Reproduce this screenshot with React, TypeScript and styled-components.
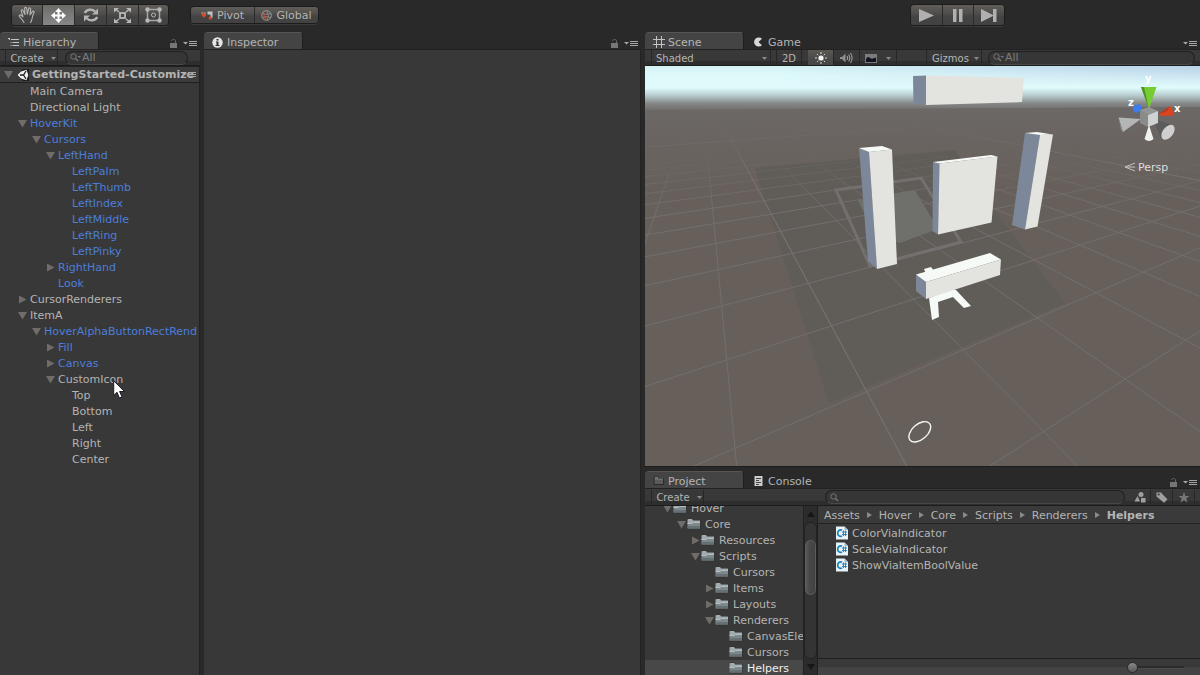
import React from 'react';
import styled, { createGlobalStyle, css } from 'styled-components';

const GlobalStyle = createGlobalStyle`
  * { box-sizing: border-box; }
  html, body { margin: 0; padding: 0; background: #292929; }
  body, button, input, select {
    font-family: "DejaVu Sans", Verdana, sans-serif;
    font-size: 11px;
    color: #b4b4b4;
  }
  button, select, input { border: 0; margin: 0; padding: 0; background: none; outline: none; border-radius: 0; }
  svg { display: block; flex: none; }
  ul { list-style: none; margin: 0; padding: 0; }
  a { color: inherit; text-decoration: none; }
`;

/* ---------- Shell ---------- */

const Window = styled.div`
  display: flex;
  flex-direction: column;
  height: 100vh;
  overflow: hidden;
  background: #292929;
`;

const MainToolbar = styled.header`
  display: flex;
  flex: none;
  align-items: center;
  height: 32px;
  padding: 0 195px 2px 11px;
`;

const ButtonGroup = styled.div<{ $height: number; $before?: string }>`
  display: flex;
  height: ${(p) => p.$height}px;
  margin-left: ${(p) => p.$before ?? '0'};
  border: 1px solid #1c1c1c;
  border-radius: 4px;
  overflow: hidden;
  box-shadow: 0 1px 0 #3a3a3a;
`;

const ToolButton = styled.button<{ $width: number; $active?: boolean }>`
  display: flex;
  align-items: center;
  justify-content: center;
  gap: 4px;
  width: ${(p) => p.$width}px;
  background: ${(p) =>
    p.$active
      ? 'linear-gradient(#6c6a67, #7a7a7a 50%, #868686)'
      : 'linear-gradient(#615e59, #504f4d 40%, #434343 60%, #424242)'};
  & + & { border-left: 1px solid #2a2a2a; }
`;

const Workspace = styled.main`
  display: grid;
  flex: 1;
  min-height: 0;
  grid-template-columns: minmax(0, 200fr) minmax(0, 437fr) minmax(0, 555fr);
  gap: 4px;
`;

const RightColumn = styled.div`
  display: grid;
  min-height: 0;
  grid-template-rows: minmax(0, 435fr) minmax(0, 204fr);
  gap: 4px;
`;

const Panel = styled.section`
  display: flex;
  flex-direction: column;
  min-width: 0;
  min-height: 0;
`;

const TabBar = styled.div`
  display: flex;
  flex: none;
  height: 17px;
`;

const Tab = styled.button<{ $active?: boolean }>`
  display: flex;
  align-items: center;
  gap: ${(p) => (p.$active ? 3 : 5)}px;
  width: 99px;
  height: 17px;
  padding: 2px 0 0 ${(p) => (p.$active ? 8 : 10)}px;
  border-top: 1px solid transparent;
  border-radius: 4px 4px 0 0;
  ${(p) =>
    p.$active &&
    css`
      background: #444;
      border-top-color: #555;
      border-right: 1px solid #1e1e1e;
    `}
`;

const TabTools = styled.div`
  display: flex;
  align-items: center;
  gap: 5px;
  margin-left: auto;
  padding: 6px 3px 0 0;
`;

const IconButton = styled.button`
  display: flex;
  align-items: center;
`;

const PanelBody = styled.div`
  flex: 1;
  min-height: 0;
  overflow: hidden;
  background: #383838;
  border-top: 1px solid #212121;
  border-right: 1px solid #222;
`;

/* ---------- Panel toolbars ---------- */

const PanelBar = styled.div<{ $height?: number }>`
  display: flex;
  flex: none;
  align-items: center;
  height: ${(p) => p.$height ?? 17}px;
  background: linear-gradient(#393939, #383838 75%, #2e2e2e 76%, #2e2e2e);
  border-top: 1px solid #222;
  border-bottom: 1px solid #1c1c1c;
`;

const BarButton = styled.button<{ $width: number; $on?: boolean; $after?: number; $gap?: number; $inset?: number }>`
  display: flex;
  flex: none;
  align-items: center;
  justify-content: center;
  gap: ${(p) => p.$gap ?? 7}px;
  width: ${(p) => p.$width}px;
  height: 15px;
  padding-top: 1px;
  padding-left: ${(p) => p.$inset ?? 0}px;
  margin-right: ${(p) => p.$after ?? 0}px;
  font-size: 10px;
  border-right: 1px solid #262626;
  background: ${(p) => (p.$on ? 'linear-gradient(#5c5853, #4b4a49 60%, #474747)' : 'none')};
`;

const BarGap = styled.span<{ $width: number; $line?: boolean }>`
  flex: none;
  width: ${(p) => p.$width}px;
  height: 15px;
  border-right: 1px solid ${(p) => (p.$line ? '#262626' : 'transparent')};
`;

const Spacer = styled.span`
  flex: 1;
`;

const SelectBox = styled.label`
  display: flex;
  flex: none;
  align-items: center;
  width: 119px;
  height: 15px;
  padding: 1px 3px 0 4px;
  border-right: 1px solid #262626;
`;

const Select = styled.select`
  flex: 1;
  appearance: none;
  font-size: 10px;
`;

const SearchBox = styled.label<{ $width?: number; $after: number }>`
  display: flex;
  flex: ${(p) => (p.$width ? `0 0 ${p.$width}px` : '1')};
  align-items: center;
  gap: 1px;
  min-width: 0;
  height: 14px;
  margin-right: ${(p) => p.$after}px;
  padding-left: 4px;
  background: #363636;
  border: 1px solid #202020;
  border-bottom-color: #484848;
  border-radius: 7px;
`;

const SearchInput = styled.input`
  width: 100%;
  min-width: 0;
  height: 12px;
  &::placeholder { color: #7c7c7c; opacity: 1; }
`;

/* ---------- Trees ---------- */

const SceneHeader = styled.div`
  position: relative;
  display: flex;
  align-items: center;
  height: 16px;
  padding-left: 3px;
  gap: 3px;
  font-weight: bold;
  white-space: nowrap;
  background: #3c3c3c;
  border-bottom: 1px solid #1f1f1f;
  overflow: hidden;
`;

const HeaderMenu = styled.span`
  position: absolute;
  right: 3px;
  top: 4px;
`;

const Row = styled.li<{ $depth: number; $blue?: boolean; $selected?: boolean }>`
  position: relative;
  display: flex;
  align-items: center;
  height: 16px;
  padding-left: ${(p) => 17 + p.$depth * 14}px;
  white-space: nowrap;
  color: ${(p) => (p.$selected ? '#f0f0f0' : p.$blue ? '#4c7edb' : '#b4b4b4')};
  background: ${(p) => (p.$selected ? '#484848' : 'transparent')};
`;

const ArrowSlot = styled.span`
  flex: none;
  width: 11px;
  margin-right: 2px;
`;

const FolderSlot = styled.span`
  flex: none;
  width: 16px;
  margin-left: -2px;
  margin-right: 2px;
`;

const Pointer = styled.span`
  position: absolute;
  left: 113px;
  top: 9px;
  z-index: 2;
`;

/* ---------- Project ---------- */

const ProjectSplit = styled.div`
  display: grid;
  flex: 1;
  min-height: 0;
  grid-template-columns: 159px 14px minmax(0, 1fr);
  background: #383838;
`;

const FolderPane = styled.nav`
  overflow: hidden;
  border-right: 1px solid #222;
`;

const ScrolledList = styled.ul`
  margin-top: -6px;
`;

const Scrollbar = styled.div`
  display: flex;
  flex-direction: column;
  align-items: center;
  padding: 5px 0;
  gap: 5px;
  background: #2c2c2c;
  border-right: 1px solid #1e1e1e;
`;

const ScrollTrack = styled.div`
  flex: 1;
  width: 13px;
  padding-top: 17px;
  background: #343434;
  border: 1px solid #222;
  border-radius: 6px;
`;

const ScrollThumb = styled.div`
  height: 55px;
  background: linear-gradient(90deg, #5a5856, #484848 40%, #424242);
  border: 1px solid #5e5e5e;
  border-radius: 6px;
`;

const FilePane = styled.div`
  display: flex;
  flex-direction: column;
  min-width: 0;
`;

const Breadcrumb = styled.nav`
  display: flex;
  flex: none;
  align-items: center;
  gap: 7px;
  height: 18px;
  padding-top: 1px;
  padding-left: 6px;
  background: #3a3a3a;
  border-bottom: 1px solid #222;
`;

const Crumb = styled.a<{ $current?: boolean }>`
  font-weight: ${(p) => (p.$current ? 'bold' : 'normal')};
`;

const FileList = styled.ul`
  flex: 1;
  padding: 1px 0 0 18px;
`;

const FileRow = styled.li`
  display: flex;
  align-items: center;
  gap: 4px;
  height: 16px;
`;

const FileFooter = styled.div`
  display: flex;
  flex: none;
  align-items: center;
  justify-content: flex-end;
  height: 17px;
  padding-right: 16px;
  background: linear-gradient(#393939 50%, #434343 50%);
  border-top: 1px solid #202020;
`;

const SizeSlider = styled.input`
  appearance: none;
  width: 57px;
  height: 11px;
  &::-webkit-slider-runnable-track {
    height: 3px;
    background: #2c2c2c;
    border-bottom: 1px solid #4c4c4c;
    border-radius: 2px;
  }
  &::-webkit-slider-thumb {
    appearance: none;
    width: 11px;
    height: 11px;
    margin-top: -4px;
    border: 1px solid #2a2a2a;
    border-radius: 50%;
    background: linear-gradient(#8a8785, #5a5a5a);
  }
`;

/* ---------- Scene ---------- */

const Viewport = styled.div`
  flex: 1;
  min-height: 0;
  background: #675f5a;
  border-bottom: 1px solid #1c1c1c;
  svg { width: 100%; height: 100%; }
`;

/* ---------- Icons ---------- */

const Caret = () => (
  <svg width="5" height="3" viewBox="0 0 5 3"><path d="M0 0h5L2.500 3z" fill="#8a8a8a" /></svg>
);

const Fold = ({ open }: { open?: boolean }) => (
  <svg width="11" height="9" viewBox="0 0 11 9">
    <path d={open ? 'M1 1h9L5.500 8.500z' : 'M2 0.500L9.500 4.500L2 8.500z'} fill="#706c69" />
  </svg>
);

const Lock = () => (
  <svg width="9" height="10" viewBox="0 0 9 10">
    <rect x="1" y="4" width="7" height="5" fill="#777" />
    <path d="M2.500 2C2.500 0 6.500 0 6.500 2V4" fill="none" stroke="#666" />
  </svg>
);

const PanelMenu = () => (
  <svg width="14" height="7" viewBox="0 0 14 7">
    <path d="M0 2h5L2.500 4.500z" fill="#aaa" />
    <path d="M6 1.500h8M6 3.500h8M6 5.500h8" stroke="#a4a4a4" />
  </svg>
);

const Glass = ({ menu }: { menu?: boolean }) => (
  <svg width={menu ? 11 : 9} height="9" viewBox={menu ? '0 0 11 9' : '0 0 9 9'}>
    <circle cx="3.500" cy="3.500" r="2.700" fill="none" stroke="#777" />
    <path d="M5.500 5.500L8 8" stroke="#777" strokeWidth="1.400" />
    {menu && <path d="M7.500 3h3.500L9.200 5z" fill="#777" />}
  </svg>
);

const HandIcon = () => (
  <svg width="18" height="18" viewBox="0 0 18 18" fill="none" stroke="#b4b4b4" strokeWidth="1.100" strokeLinejoin="round" strokeLinecap="round">
    <path d="M6 16.500C5 14.500 3.500 13 1.300 10.300C.7 9.200 2 8.400 3 9.200L5 10.800L3.300 5C3 3.700 4.600 3.200 5.100 4.400L6.900 8.500L6.600 2.500C6.600 1 8.500 1 8.700 2.500L9.300 8.200L10.700 2.700C11.100 1.400 12.900 1.800 12.700 3.200L11.900 8.800L14.300 5.600C15.100 4.600 16.500 5.400 16 6.500C15 8.600 14.500 10 14.200 12C14 14 13 15 12.700 16.500" />
  </svg>
);

const MoveIcon = () => (
  <svg width="15" height="15" viewBox="0 0 15 15" fill="#fff">
    <path d="M7.500 0L11 4H8.500V6.500H11V4L15 7.500L11 11V8.500H8.500V11H11L7.500 15L4 11H6.500V8.500H4V11L0 7.500L4 4V6.500H6.500V4H4z" />
  </svg>
);

const RotateIcon = () => (
  <svg width="16" height="16" viewBox="0 0 16 16" fill="none" stroke="#b4b4b4" strokeWidth="2.400">
    <path d="M1.800 6C3.500 2.200 9 1.500 12 4.500" />
    <path d="M14.200 10C12.500 13.800 7 14.500 4 11.500" />
    <path d="M15 1.500V7.500H9z" fill="#b4b4b4" stroke="none" />
    <path d="M1 14.500V8.500H7z" fill="#b4b4b4" stroke="none" />
  </svg>
);

const ScaleIcon = () => (
  <svg width="17" height="15" viewBox="0 0 17 15" fill="none" stroke="#b8b8b8">
    <rect x="6" y="5" width="5" height="5" strokeWidth="1.800" />
    <path d="M5 4L1 .8M12 4L16 .8M5 11L1 14.200M12 11L16 14.200" strokeWidth="1.400" />
    <path d="M0 0H5L0 4.500zM17 0H12L17 4.500zM0 15H5L0 10.500zM17 15H12L17 10.500z" fill="#b8b8b8" stroke="none" />
  </svg>
);

const RectIcon = () => (
  <svg width="17" height="16" viewBox="0 0 17 16" fill="#b8b8b8">
    <rect x="2.500" y="2.500" width="12" height="11" fill="none" stroke="#a8a8a8" strokeWidth="1.500" />
    <circle cx="2.500" cy="2.500" r="2.200" /><circle cx="14.500" cy="2.500" r="2.200" />
    <circle cx="2.500" cy="13.500" r="2.200" /><circle cx="14.500" cy="13.500" r="2.200" />
    <circle cx="8.500" cy="8" r="2" fill="none" stroke="#b8b8b8" />
  </svg>
);

const PivotIcon = () => (
  <svg width="12" height="9" viewBox="0 0 12 9">
    <path d="M0 1h5v2H0z" fill="#7a7a7a" />
    <path d="M1 2.500h4v2L3 7L1 4.500z" fill="#d8482a" />
    <path d="M6.500 .5h5v6.500h-2V3.500h-3z" fill="#c4c4c4" />
    <circle cx="9.300" cy="7" r="1.700" fill="#d8482a" />
  </svg>
);

const GlobeIcon = () => (
  <svg width="11" height="11" viewBox="0 0 11 11" fill="none" stroke="#9c9c9c">
    <circle cx="5.500" cy="5.500" r="4.800" />
    <path d="M1 3.500Q5.500 5.500 10 3.500M1 7.500Q5.500 5.500 10 7.500M5.500 1Q9 5 6 10" strokeWidth=".7" />
    <path d="M3 3V8H7" stroke="#d8482a" strokeWidth="1.200" />
  </svg>
);

const PlayIcon = () => (
  <svg width="15" height="13" viewBox="0 0 15 13"><path d="M0 0L15 6.500L0 13z" fill="#b0b0b0" /></svg>
);
const PauseIcon = () => (
  <svg width="10" height="13" viewBox="0 0 10 13"><path d="M0 0h3.500v13H0zM6 0h3.500v13H6z" fill="#b0b0b0" /></svg>
);
const StepIcon = () => (
  <svg width="16" height="13" viewBox="0 0 16 13"><path d="M0 0L12 6V0h3.500v13H12V7L0 13z" fill="#b0b0b0" /></svg>
);

const HierarchyIcon = () => (
  <svg width="12" height="9" viewBox="0 0 12 9" stroke="#c4c4c4">
    <path d="M0 .5h2M3 1.500h8M4.500 4.500H11M4.500 7.500H11M2.500 4.500h1M2.500 7.500h1M1.500 1v1" />
  </svg>
);

const InfoIcon = () => (
  <svg width="12" height="11" viewBox="0 0 12 11">
    <circle cx="5.500" cy="5.500" r="5.200" fill="#e6e6e6" />
    <path d="M4.500 2h2v1.500h-2zM4 4.500h2.500v3.500H7.500V9h-4V8h1V5.500H4z" fill="#333" />
  </svg>
);

const GridIcon = () => (
  <svg width="12" height="12" viewBox="0 0 12 12" stroke="#c4c4c4">
    <path d="M3.500 0v12M8.500 0v12M0 3.500h12M0 8.500h12" />
  </svg>
);

const GameIcon = () => (
  <svg width="9" height="10" viewBox="0 0 9 10">
    <path d="M8 1.800A4.600 4.600 0 1 0 8 8.200L4.500 5z" fill="#d8d8d8" />
  </svg>
);

const FolderTabIcon = () => (
  <svg width="12" height="10" viewBox="0 0 12 10">
    <path d="M1 2.500V1h4v1.500h5.500V8.500H1z" fill="#5a5a5a" stroke="#2a2a2a" />
    <path d="M2 1.500h3M2 3h8" stroke="#8a8a8a" strokeWidth=".8" />
  </svg>
);

const ConsoleIcon = () => (
  <svg width="9" height="11" viewBox="0 0 9 11">
    <path d="M.5 0h8v10h-8z" fill="#ccc" />
    <path d="M2 2.500h5M2 4.500h3M2 6.500h5M2 8.500h3" stroke="#444" />
  </svg>
);

const SunIcon = () => (
  <svg width="12" height="12" viewBox="0 0 12 12" stroke="#e8e8e8">
    <circle cx="6" cy="6" r="2.600" fill="#f4f4f4" stroke="none" />
    <path d="M6 0v2M6 10v2M0 6h2M10 6h2M2 2l1.200 1.200M8.800 8.800L10 10M2 10l1.200-1.200M8.800 3.200L10 2" strokeWidth=".9" />
  </svg>
);

const SoundIcon = () => (
  <svg width="13" height="12" viewBox="0 0 13 12" fill="none" stroke="#a8a8a8">
    <path d="M0 5h2L5.500 1.500v9L2 7H0z" fill="#8e8e8e" stroke="none" />
    <path d="M7 4Q8.500 6 7 8M8.800 2.500Q11 6 8.800 9.500M10.500 1Q13.700 6 10.500 11" />
  </svg>
);

const PictureIcon = () => (
  <svg width="12" height="9" viewBox="0 0 12 9">
    <path d="M0 0h12v9H0z" fill="#7c7c7c" />
    <path d="M1 5Q3 1.500 5 4Q7 5.500 11 3.500V8H1z" fill="#10131f" />
  </svg>
);

const UnityIcon = () => (
  <svg width="12" height="12" viewBox="0 0 12 12">
    <path d="M6 0H12V12H6L0 6z" fill="#1c1c1c" />
    <path d="M.5 6L4 2.500L9.500 .8L11.300 6L9.500 11.200L4 9.500z" fill="#f0f0f0" />
    <path d="M3 6H6.500L9 2M6.500 6L9 10" stroke="#1c1c1c" strokeWidth="1.300" fill="none" />
  </svg>
);

const FolderIcon = () => (
  <svg width="14" height="12" viewBox="0 0 14 12">
    <path d="M0 1.500L1 .5h4.500l1 1.500H13.500v9.500H0z" fill="#2c3032" />
    <path d="M.5 1.500L1.200 1h4l.8 1.500H13V6H.5z" fill="#a3abae" />
    <path d="M.5 5h5l1-1H13v6.500H.5z" fill="#7d888d" />
    <path d="M.5 8H13v2.500H.5z" fill="#667176" />
    <path d="M.5 5.500h5l1-1H13" fill="none" stroke="#c4cacc" strokeWidth=".8" />
  </svg>
);

const ScriptIcon = () => (
  <svg width="12" height="14" viewBox="0 0 12 14">
    <path d="M0 .5h8.500L12 4v9.500H0z" fill="#e9f2f6" />
    <path d="M8.500 .5L12 4H8.500z" fill="#a9bcc6" />
    <path d="M6 4.300A3 3.200 0 1 0 6 10" fill="none" stroke="#1a7fc1" strokeWidth="1.700" />
    <path d="M7.500 4.500V10M9.500 4.500V10M6 6h5M6 8.500h5" stroke="#1a7fc1" strokeWidth=".9" />
  </svg>
);

const CrumbArrow = () => (
  <svg width="5" height="6" viewBox="0 0 5 6"><path d="M0 0L5 3L0 6z" fill="#8a8a8a" /></svg>
);

const ShapesIcon = () => (
  <svg width="12" height="11" viewBox="0 0 12 11" fill="#a0a0a0">
    <circle cx="7" cy="2.500" r="2.500" /><path d="M3.500 4L6 9.500H.5z" /><path d="M7 6h4.500v4.500H7z" />
  </svg>
);
const TagIcon = () => (
  <svg width="12" height="11" viewBox="0 0 12 11">
    <path d="M.5 .5h4.500L11.500 7.500L8 10.800L.5 4.500z" fill="#a0a0a0" /><circle cx="2.700" cy="2.500" r="1" fill="#333" />
  </svg>
);
const StarIcon = () => (
  <svg width="12" height="11" viewBox="0 0 12 11">
    <path d="M6 0L7.400 4H11.500L8.200 6.500L9.500 10.700L6 8.200L2.500 10.700L3.800 6.500L.5 4H4.600z" fill="#7a7674" />
  </svg>
);

const ScrollArrow = ({ down }: { down?: boolean }) => (
  <svg width="8" height="6" viewBox="0 0 8 6"><path d={down ? 'M0 0h8L4 6z' : 'M0 6h8L4 0z'} fill="#161616" /></svg>
);

const PointerIcon = () => (
  <svg width="13" height="19" viewBox="0 0 13 19">
    <path d="M.7 .8V15.500L4 12.300L6.400 18L9 16.800L6.600 11.500H11.500z" fill="#fff" stroke="#1a1a2a" />
  </svg>
);

/* ---------- Scene drawing ---------- */

/* Projects a ground-plane cell corner (column, row) to the screen. */
const project = (column: number, row: number) => {
  const u = (column - 1) / 4;
  const v = (row - 1) / 2;
  const w = 0.7229 * u + 0.6373 * v + 1;
  return { x: (1153.3 * u + 446.6 * v + 735) / w, y: (56 * u + 52.7 * v + 448.3) / w };
};
const ROW_VANISH = { x: 1595, y: 77.5 };
const COLUMN_VANISH = { x: 700.8, y: 82.7 };

const rowPath = (row: number) => {
  const p = project(1, row);
  const slope = (ROW_VANISH.y - p.y) / (ROW_VANISH.x - p.x);
  return `M645 ${p.y + slope * (645 - p.x)}L1200 ${p.y + slope * (1200 - p.x)}`;
};
const columnPath = (column: number) => {
  const p = project(column, 3);
  const dx = (p.x - COLUMN_VANISH.x) / (p.y - COLUMN_VANISH.y);
  return `M${COLUMN_VANISH.x + dx * 20} 102.700L${COLUMN_VANISH.x + dx * 400} 482.700`;
};
const range = (from: number, to: number) => Array.from({ length: to - from + 1 }, (_, i) => from + i);
const minorGrid = [...range(0, 15).map(rowPath), ...range(-4, 16).map(columnPath)].join('');
const majorGrid = [17, 27].map(rowPath).concat([-8, 2, 12].map(columnPath)).join('');

const SceneView = () => (
  <svg viewBox="645 66 555 400" preserveAspectRatio="xMidYMid slice" role="img" aria-label="Scene view">
    <defs>
      <linearGradient id="sky" x1="0" y1="66" x2="0" y2="112" gradientUnits="userSpaceOnUse">
        <stop offset="0" stopColor="#d4f2f4" /><stop offset=".2" stopColor="#def9fa" />
        <stop offset=".48" stopColor="#dffafb" /><stop offset=".64" stopColor="#b7cbce" />
        <stop offset=".82" stopColor="#848585" /><stop offset="1" stopColor="#6c6866" />
      </linearGradient>
      <linearGradient id="skyBlue" x1="780" y1="0" x2="1200" y2="0" gradientUnits="userSpaceOnUse">
        <stop offset="0" stopColor="#b9d2ee" stopOpacity="0" /><stop offset="1" stopColor="#b9d2e8" />
      </linearGradient>
      <linearGradient id="skyDown" x1="0" y1="66" x2="0" y2="86" gradientUnits="userSpaceOnUse">
        <stop offset="0" stopColor="#fff" /><stop offset="1" stopColor="#000" />
      </linearGradient>
      <linearGradient id="ground" x1="0" y1="108" x2="0" y2="190" gradientUnits="userSpaceOnUse">
        <stop offset="0" stopColor="#6c6866" /><stop offset="1" stopColor="#675f5a" />
      </linearGradient>
      <linearGradient id="nearFade" x1="0" y1="145" x2="0" y2="205" gradientUnits="userSpaceOnUse">
        <stop offset="0" stopColor="#000" /><stop offset="1" stopColor="#fff" />
      </linearGradient>
      <linearGradient id="farFade" x1="0" y1="116" x2="0" y2="180" gradientUnits="userSpaceOnUse">
        <stop offset="0" stopColor="#000" /><stop offset="1" stopColor="#fff" />
      </linearGradient>
      <mask id="near" maskUnits="userSpaceOnUse" x="645" y="66" width="555" height="401"><path d="M645 66h555v401H645z" fill="url(#nearFade)" /></mask>
      <mask id="far" maskUnits="userSpaceOnUse" x="645" y="66" width="555" height="401"><path d="M645 66h555v401H645z" fill="url(#farFade)" /></mask>
      <mask id="upper" maskUnits="userSpaceOnUse" x="645" y="66" width="555" height="40"><path d="M645 66h555v40H645z" fill="url(#skyDown)" /></mask>
    </defs>
    <path d="M645 0h555v120H645z" fill="url(#sky)" />
    <path d="M645 66h555v40H645z" fill="url(#skyBlue)" mask="url(#upper)" />
    <path d="M645 110L1200 107V500H645z" fill="url(#ground)" />
    <path d="M755 168L829 403L1065 303L998 215L955 150z" fill="#605c57" />
    <path d="M858 200L915 190L938 229L900 243L876 239z" fill="#6f706b" />
    <path d="M836 190L921 178L961 242L870 266z" fill="none" stroke="#737170" strokeWidth="3" />
    <path d={minorGrid} fill="none" stroke="#736f6e" strokeWidth="1" mask="url(#near)" />
    <path d={majorGrid} fill="none" stroke="#767271" strokeWidth="1" mask="url(#far)" />

    <path d="M913 76L926 75.500V105L913.500 104z" fill="#7c8899" />
    <path d="M926 75.500L1024 78L1022 102L926 105z" fill="#e3e3df" />

    <path d="M859 148L869 152L877 269L868 261z" fill="#7c8899" />
    <path d="M869 152L892 149.500L897 264L877 269z" fill="#e3e3df" />
    <path d="M859 148L882 146L892 149.500L869 152z" fill="#f6faf7" />

    <path d="M933 162L939.500 163.500L938 234.500L932.500 231z" fill="#7c8899" />
    <path d="M939.500 163.500L997.500 156.500L991.500 222.500L938 234.500z" fill="#e3e3df" />
    <path d="M933 162L991 155L997.500 156.500L939.500 163.500z" fill="#f6faf7" />

    <path d="M1025 133L1040 135L1025 229.500L1012 225z" fill="#7c8899" />
    <path d="M1040 135L1053 134.500L1037.500 226.500L1025 229.500z" fill="#e3e3df" />
    <path d="M1025 133L1037 132L1053 134.500L1040 135z" fill="#f6faf7" />

    <path d="M929 298L952 289L956 290L971 306L964 308L953 297L938 302L939 317L932 320z" fill="#f6faf7" />
    <path d="M924 269L931 267L934 271L926 274z" fill="#f6faf7" />
    <path d="M916 274.500L926 282V299L916 291z" fill="#7c8899" />
    <path d="M916 274.500L990 253L1001 259.500L926 282z" fill="#f6faf7" />
    <path d="M926 282L1001 259.500L1000 275L926 299z" fill="#e3e3df" />

    <ellipse cx="919.800" cy="431.800" rx="12.800" ry="7.600" transform="rotate(-41 919.800 431.800)" fill="none" stroke="#f4f6f4" strokeWidth="1.400" />

    <path d="M1154 122L1161 138L1174 126L1158 120z" fill="#5c5c5c" />
    <ellipse cx="1168" cy="132.300" rx="8.500" ry="5.200" transform="rotate(-52 1168 132.300)" fill="#cfcfcf" />
    <path d="M1149 125L1144.500 139Q1149 143 1153.500 139z" fill="#f0f2f0" />
    <path d="M1141 119L1118.500 117.500L1123 132z" fill="#b4b6b6" />
    <path d="M1118.500 117.500L1123 132L1121 130z" fill="#888b8b" />
    <path d="M1133 106L1140 104L1142 109L1137 113Q1132 112 1133 106z" fill="#3c7bf0" />
    <path d="M1159 114L1170 106Q1174 110 1173 115.500L1161 116z" fill="#dc4420" />
    <path d="M1159 114L1170 106L1167 111z" fill="#b8381c" />
    <path d="M1141 87H1156.500L1149 109z" fill="#76cc32" />
    <path d="M1141 87H1144L1149 109z" fill="#4c9322" />
    <path d="M1140 110L1149 107L1158 111L1148 115z" fill="#949696" />
    <path d="M1140 110L1148 115V127L1140 123z" fill="#8a8c8c" />
    <path d="M1148 115L1158 111V123L1148 127z" fill="#d0d2d2" />
    <g fill="#fff" fontFamily='"DejaVu Sans", sans-serif' fontSize="10" fontWeight="bold">
      <text x="1145" y="82">y</text>
      <text x="1128" y="106">z</text>
      <text x="1174" y="112">x</text>
    </g>
    <path d="M1135 163L1125 167L1135 171M1125 167H1135" fill="none" stroke="#c4c2c0" />
    <text x="1138" y="171" fill="#dedede" fontFamily='"DejaVu Sans", sans-serif' fontSize="11">Persp</text>
  </svg>
);

/* ---------- Data ---------- */

type Node = { name: string; depth: number; fold?: 'open' | 'closed'; blue?: boolean; pointer?: boolean; selected?: boolean };

const hierarchy: Node[] = [
  { name: 'Main Camera', depth: 0 },
  { name: 'Directional Light', depth: 0 },
  { name: 'HoverKit', depth: 0, fold: 'open', blue: true },
  { name: 'Cursors', depth: 1, fold: 'open', blue: true },
  { name: 'LeftHand', depth: 2, fold: 'open', blue: true },
  { name: 'LeftPalm', depth: 3, blue: true },
  { name: 'LeftThumb', depth: 3, blue: true },
  { name: 'LeftIndex', depth: 3, blue: true },
  { name: 'LeftMiddle', depth: 3, blue: true },
  { name: 'LeftRing', depth: 3, blue: true },
  { name: 'LeftPinky', depth: 3, blue: true },
  { name: 'RightHand', depth: 2, fold: 'closed', blue: true },
  { name: 'Look', depth: 2, blue: true },
  { name: 'CursorRenderers', depth: 0, fold: 'closed' },
  { name: 'ItemA', depth: 0, fold: 'open' },
  { name: 'HoverAlphaButtonRectRend', depth: 1, fold: 'open', blue: true },
  { name: 'Fill', depth: 2, fold: 'closed', blue: true },
  { name: 'Canvas', depth: 2, fold: 'closed', blue: true },
  { name: 'CustomIcon', depth: 2, fold: 'open', pointer: true },
  { name: 'Top', depth: 3 },
  { name: 'Bottom', depth: 3 },
  { name: 'Left', depth: 3 },
  { name: 'Right', depth: 3 },
  { name: 'Center', depth: 3 },
];

const folders: Node[] = [
  { name: 'Hover', depth: 0, fold: 'open' },
  { name: 'Core', depth: 1, fold: 'open' },
  { name: 'Resources', depth: 2, fold: 'closed' },
  { name: 'Scripts', depth: 2, fold: 'open' },
  { name: 'Cursors', depth: 3 },
  { name: 'Items', depth: 3, fold: 'closed' },
  { name: 'Layouts', depth: 3, fold: 'closed' },
  { name: 'Renderers', depth: 3, fold: 'open' },
  { name: 'CanvasEle', depth: 4 },
  { name: 'Cursors', depth: 4 },
  { name: 'Helpers', depth: 4, selected: true },
];

const crumbs = ['Assets', 'Hover', 'Core', 'Scripts', 'Renderers', 'Helpers'];
const files = ['ColorViaIndicator', 'ScaleViaIndicator', 'ShowViaItemBoolValue'];

const TreeRow = ({ node, folder }: { node: Node; folder?: boolean }) => (
  <Row $depth={node.depth} $blue={node.blue} $selected={node.selected}>
    <ArrowSlot>{node.fold && <Fold open={node.fold === 'open'} />}</ArrowSlot>
    {folder && <FolderSlot><FolderIcon /></FolderSlot>}
    {node.name}
    {node.pointer && <Pointer><PointerIcon /></Pointer>}
  </Row>
);

const PanelTools = ({ lock }: { lock?: boolean }) => (
  <TabTools>
    {lock && <IconButton aria-label="Lock"><Lock /></IconButton>}
    <IconButton aria-label="Panel menu"><PanelMenu /></IconButton>
  </TabTools>
);

export default function App() {
  return (
    <>
      <GlobalStyle />
      <Window>
        <MainToolbar>
          <ButtonGroup $height={22}>
            <ToolButton $width={30} aria-label="Hand"><HandIcon /></ToolButton>
            <ToolButton $width={32} $active aria-label="Move"><MoveIcon /></ToolButton>
            <ToolButton $width={32} aria-label="Rotate"><RotateIcon /></ToolButton>
            <ToolButton $width={32} aria-label="Scale"><ScaleIcon /></ToolButton>
            <ToolButton $width={30} aria-label="Rect"><RectIcon /></ToolButton>
          </ButtonGroup>
          <ButtonGroup $height={18} $before="21px">
            <ToolButton $width={63}><PivotIcon />Pivot</ToolButton>
            <ToolButton $width={64}><GlobeIcon />Global</ToolButton>
          </ButtonGroup>
          <ButtonGroup $height={22} $before="auto">
            <ToolButton $width={31} aria-label="Play"><PlayIcon /></ToolButton>
            <ToolButton $width={31} aria-label="Pause"><PauseIcon /></ToolButton>
            <ToolButton $width={31} aria-label="Step"><StepIcon /></ToolButton>
          </ButtonGroup>
        </MainToolbar>

        <Workspace>
          <Panel>
            <TabBar>
              <Tab $active><HierarchyIcon />Hierarchy</Tab>
              <PanelTools lock />
            </TabBar>
            <PanelBar>
              <BarGap $width={6} $line />
              <BarButton $width={52} $after={7} $inset={3}>Create<Caret /></BarButton>
              <SearchBox $after={12}>
                <Glass menu />
                <SearchInput aria-label="Search hierarchy" placeholder="All" />
              </SearchBox>
            </PanelBar>
            <PanelBody>
              <SceneHeader>
                <Fold open /><UnityIcon />GettingStarted-Customize
                <HeaderMenu><PanelMenu /></HeaderMenu>
              </SceneHeader>
              <ul>{hierarchy.map((n) => <TreeRow key={n.name} node={n} />)}</ul>
            </PanelBody>
          </Panel>

          <Panel>
            <TabBar>
              <Tab $active><InfoIcon />Inspector</Tab>
              <PanelTools lock />
            </TabBar>
            <PanelBody />
          </Panel>

          <RightColumn>
            <Panel>
              <TabBar>
                <Tab $active><GridIcon />Scene</Tab>
                <Tab><GameIcon />Game</Tab>
                <PanelTools />
              </TabBar>
              <PanelBar>
                <BarGap $width={7} $line />
                <SelectBox>
                  <Select aria-label="Shading mode" defaultValue="Shaded"><option>Shaded</option></Select>
                  <Caret />
                </SelectBox>
                <BarGap $width={6} $line />
                <BarButton $width={25} $after={6}>2D</BarButton>
                <BarButton $width={26} $on aria-label="Lighting"><SunIcon /></BarButton>
                <BarButton $width={26} aria-label="Audio"><SoundIcon /></BarButton>
                <BarButton $width={37} $gap={9} aria-label="Effects"><PictureIcon /><Caret /></BarButton>
                <BarGap $width={30} $line />
                <BarButton $width={55} $after={6} $gap={5} $inset={3}>Gizmos<Caret /></BarButton>
                <SearchBox $after={5}>
                  <Glass menu />
                  <SearchInput aria-label="Search scene" placeholder="All" />
                </SearchBox>
              </PanelBar>
              <Viewport><SceneView /></Viewport>
            </Panel>

            <Panel>
              <TabBar>
                <Tab $active><FolderTabIcon />Project</Tab>
                <Tab><ConsoleIcon />Console</Tab>
                <PanelTools lock />
              </TabBar>
              <PanelBar $height={18}>
                <BarGap $width={7} $line />
                <BarButton $width={52} $inset={3}>Create<Caret /></BarButton>
                <Spacer />
                <SearchBox $width={300} $after={4}>
                  <Glass />
                  <SearchInput aria-label="Search project" />
                </SearchBox>
                <BarButton $width={22} aria-label="Filter by type"><ShapesIcon /></BarButton>
                <BarButton $width={22} aria-label="Filter by label"><TagIcon /></BarButton>
                <BarButton $width={22} $after={5} aria-label="Favourite"><StarIcon /></BarButton>
              </PanelBar>
              <ProjectSplit>
                <FolderPane>
                  <ScrolledList>
                    {folders.map((n, i) => <TreeRow key={i} node={n} folder />)}
                  </ScrolledList>
                </FolderPane>
                <Scrollbar>
                  <ScrollArrow />
                  <ScrollTrack><ScrollThumb /></ScrollTrack>
                  <ScrollArrow down />
                </Scrollbar>
                <FilePane>
                  <Breadcrumb>
                    {crumbs.map((c, i) => (
                      <React.Fragment key={c}>
                        {i > 0 && <CrumbArrow />}
                        <Crumb href="#" $current={i === crumbs.length - 1}>{c}</Crumb>
                      </React.Fragment>
                    ))}
                  </Breadcrumb>
                  <FileList>
                    {files.map((f) => <FileRow key={f}><ScriptIcon />{f}</FileRow>)}
                  </FileList>
                  <FileFooter>
                    <SizeSlider type="range" min="0" max="100" defaultValue="0" aria-label="Icon size" />
                  </FileFooter>
                </FilePane>
              </ProjectSplit>
            </Panel>
          </RightColumn>
        </Workspace>
      </Window>
    </>
  );
}
